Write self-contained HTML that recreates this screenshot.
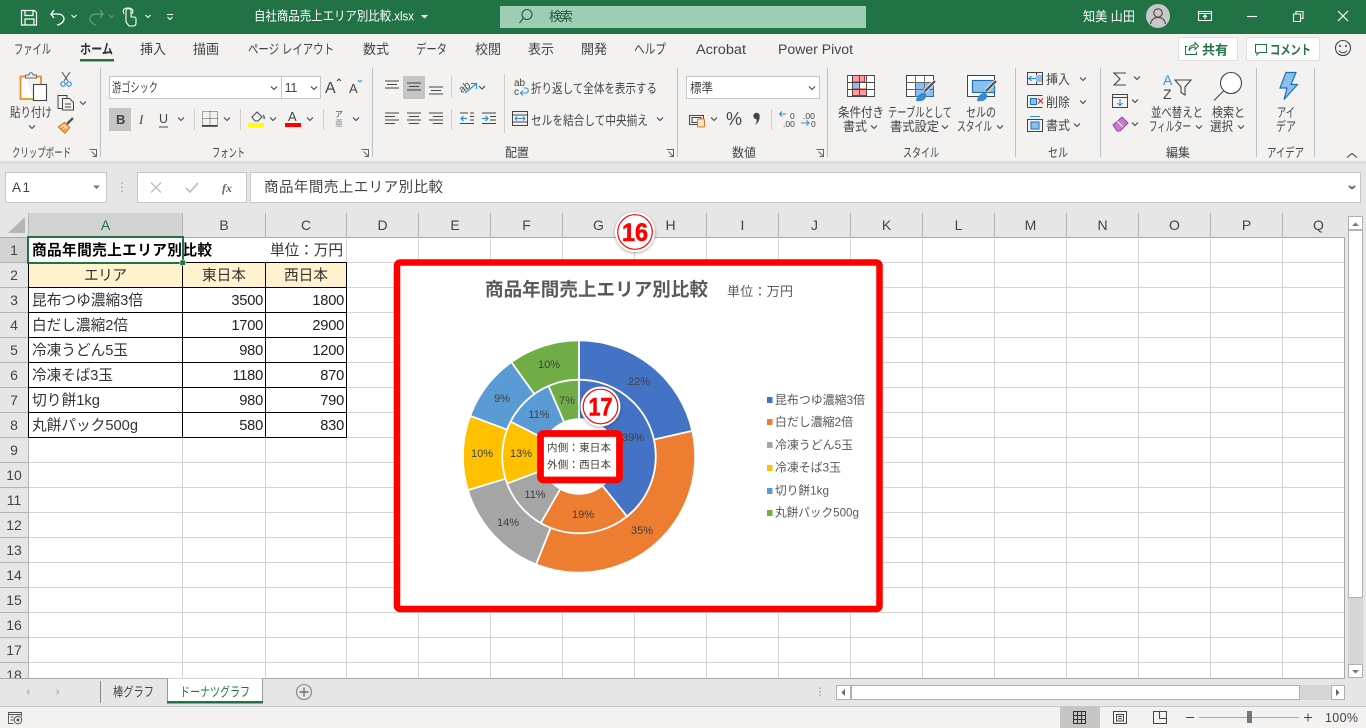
<!DOCTYPE html>
<html lang="ja"><head><meta charset="utf-8"><title>自社商品売上エリア別比較.xlsx</title>
<style>
html,body{margin:0;padding:0;background:#e6e6e6;overflow:hidden}
svg{display:block;position:absolute;left:0;top:0}
text{font-family:"Liberation Sans","Noto Sans CJK JP",sans-serif;font-size:13px;fill:#444;white-space:pre}
.w{fill:#fff}
.c{font-size:14.67px;fill:#333}
.h{font-size:14px;fill:#444;text-anchor:middle}
.n{font-size:14.67px;fill:#222;text-anchor:end;letter-spacing:-.25px}
.m{font-size:11px;fill:#404040;text-anchor:middle}
.l{font-size:12px;fill:#595959}
.tb{font-size:13.5px}
.gl{font-size:12.5px}
.g{stroke:#d4d4d4;stroke-width:1}
.hl{stroke:#b4b4b4;stroke-width:1}
.t{stroke:#000;stroke-width:1}
</style></head><body>
<svg width="1366" height="728" viewBox="0 0 1366 728" xmlns="http://www.w3.org/2000/svg">
<defs>
<path id="cv" d="M-3-1.500L0 1.500L3-1.500" fill="none" stroke="#444" stroke-width="1.100"/>
<path id="la" d="M0 0h7v7M2 2l5 5M7 3v4h-4" fill="none" stroke="#666" stroke-width="1"/>
<filter id="sh" x="-30%" y="-30%" width="160%" height="160%"><feDropShadow dx="0" dy="1" stdDeviation="1.500" flood-color="#000" flood-opacity=".35"/></filter>
</defs>
<rect width="1366" height="728" fill="#e6e6e6"/>

<!-- title bar -->
<rect width="1366" height="34" fill="#217346"/>
<g fill="none" stroke="#fff" stroke-width="1.200">
<path d="M21.500 10.500h13l2 2v12.500h-15zM25 10.500v5h8v-5M25 25v-6h9v6"/>
<path d="M54 10l-3 4h7c4 0 6 2.500 6 5s-3 5.500-7 6M51 14l3 4" stroke-width="1.300"/>
<g stroke="#6f9c83"><path d="M100 10l3 4h-7c-4 0-6 2.500-6 5s3 5.500 6 6M103 14l-3 4"/><path d="M109 15l2.500 2.500l2.500-2.500" stroke-width="1"/></g>
<path d="M126 19v-8c0-3 5-3 5 0v6h3c2 0 2 1 2 3v3c0 2-1 3-3 3h-4l-3-4zM124 14c-2-4 0-6 4-6s6 2 4 6" stroke-width="1.100"/>
</g>
<path d="M71.500 15l2.500 2.500l2.500-2.500M145.500 15l2.500 2.500l2.500-2.500M167 14.500h6M167.500 17l2.500 2.500l2.500-2.500" fill="none" stroke="#fff" stroke-width="1"/>
<text class="w" x="254" y="20.500" textLength="160" lengthAdjust="spacingAndGlyphs">自社商品売上エリア別比較.xlsx</text>
<path d="M421 15h7l-3.500 3.500z" fill="#fff"/>
<rect x="500" y="6" width="366" height="22" fill="#9fcdb3"/>
<circle cx="527" cy="14.500" r="5" fill="none" stroke="#1f5c3c" stroke-width="1.100"/><path d="M523.500 18l-4 5" stroke="#1f5c3c" stroke-width="1.100"/>
<text x="549" y="21" textLength="24" style="fill:#1c5a39">検索</text>
<text class="w" x="1083" y="21" textLength="52" lengthAdjust="spacingAndGlyphs">知美 山田</text>
<circle cx="1158" cy="16" r="12" fill="#c8c8c8"/>
<circle cx="1158" cy="13" r="4.200" fill="none" stroke="#444" stroke-width="1.100"/><path d="M1150.500 24c1-5 4-6.500 7.500-6.500s6.500 1.500 7.500 6.500" fill="none" stroke="#444" stroke-width="1.100"/>
<g fill="none" stroke="#fff" stroke-width="1.100">
<path d="M1198.500 11.500h13v9h-13zM1198.500 13.500h13M1205 19v-4M1203 17l2-2l2 2"/>
<path d="M1247 16.500h10"/>
<path d="M1293.500 14h7v7.500h-7zM1296 14v-2.500h7v7h-2.500"/>
<path d="M1338 11l10 10M1348 11l-10 10" stroke-width="1.200"/>
</g>

<!-- ribbon -->
<rect y="34" width="1366" height="127" fill="#f3f2f1"/>
<rect y="161" width="1366" height="3" fill="#dcdcdc"/>
<text class="tb" x="14" y="54" textLength="37" lengthAdjust="spacingAndGlyphs">ファイル</text>
<text class="tb" x="80" y="54" textLength="33" lengthAdjust="spacingAndGlyphs" font-weight="700" style="fill:#333">ホーム</text>
<rect x="80" y="59" width="34" height="2.500" fill="#217346"/>
<text class="tb" x="140" y="54" textLength="26" lengthAdjust="spacingAndGlyphs">挿入</text>
<text class="tb" x="193" y="54" textLength="26" lengthAdjust="spacingAndGlyphs">描画</text>
<text class="tb" x="248" y="54" textLength="86" lengthAdjust="spacingAndGlyphs">ページ レイアウト</text>
<text class="tb" x="363" y="54" textLength="26" lengthAdjust="spacingAndGlyphs">数式</text>
<text class="tb" x="416" y="54" textLength="31" lengthAdjust="spacingAndGlyphs">データ</text>
<text class="tb" x="475" y="54" textLength="26" lengthAdjust="spacingAndGlyphs">校閲</text>
<text class="tb" x="528" y="54" textLength="26" lengthAdjust="spacingAndGlyphs">表示</text>
<text class="tb" x="581" y="54" textLength="26" lengthAdjust="spacingAndGlyphs">開発</text>
<text class="tb" x="634" y="54" textLength="32" lengthAdjust="spacingAndGlyphs">ヘルプ</text>
<text class="tb" x="696" y="54" textLength="50" lengthAdjust="spacingAndGlyphs">Acrobat</text>
<text class="tb" x="778" y="54" textLength="75" lengthAdjust="spacingAndGlyphs">Power Pivot</text>

<rect x="1178.500" y="37.500" width="59" height="23" rx="1.500" fill="#fff" stroke="#e1dfdd"/>
<path d="M1187.500 46.500h-2v8h11v-3M1189 51c0-4 2-6 6-6v-2.500l3.500 3.500l-3.500 3.500v-2.500c-3 0-5 1-6 4z" fill="none" stroke="#217346" stroke-width="1"/>
<text x="1202" y="54.500" textLength="26" font-weight="700" style="font-size:13px;fill:#217346">共有</text>
<rect x="1246.500" y="37.500" width="73" height="23" rx="1.500" fill="#fff" stroke="#e1dfdd"/>
<path d="M1255.500 44.500h11v8h-7.500l-2 2.500v-2.500h-1.500z" fill="none" stroke="#217346" stroke-width="1"/>
<text x="1270" y="54.500" textLength="41" lengthAdjust="spacingAndGlyphs" font-weight="700" style="font-size:13px;fill:#217346">コメント</text>
<circle cx="1343" cy="48" r="7.500" fill="none" stroke="#444" stroke-width="1.100"/>
<circle cx="1340" cy="46" r="1" fill="#444"/><circle cx="1346" cy="46" r="1" fill="#444"/>
<path d="M1339 50.500c2 3 6 3 8 0" fill="none" stroke="#444"/>

<!-- group separators -->
<path d="M100.500 68v89M372.500 68v89M677.500 68v89M827.500 68v89M1015.500 68v89M1100.500 68v89M1256.500 68v89M1314.500 68v89" stroke="#c0c0c0" stroke-width="1"/>
<path d="M194.500 109v21M240.500 109v21M323.500 109v21M451.500 76v22M451.500 109v21M504.500 74v59M771.500 109v21" stroke="#d0cecc" stroke-width="1"/>

<!-- group labels -->
<text class="gl" x="12" y="157" textLength="59" lengthAdjust="spacingAndGlyphs">クリップボード</text>
<text class="gl" x="212" y="157" textLength="33" lengthAdjust="spacingAndGlyphs">フォント</text>
<text class="gl" x="505" y="157" textLength="24" lengthAdjust="spacingAndGlyphs">配置</text>
<text class="gl" x="732" y="157" textLength="24" lengthAdjust="spacingAndGlyphs">数値</text>
<text class="gl" x="903" y="157" textLength="36" lengthAdjust="spacingAndGlyphs">スタイル</text>
<text class="gl" x="1048" y="157" textLength="20" lengthAdjust="spacingAndGlyphs">セル</text>
<text class="gl" x="1166" y="157" textLength="24" lengthAdjust="spacingAndGlyphs">編集</text>
<text class="gl" x="1267" y="157" textLength="37" lengthAdjust="spacingAndGlyphs">アイデア</text>
<use href="#la" x="89.500" y="149.500"/><use href="#la" x="361.500" y="149.500"/><use href="#la" x="666.500" y="149.500"/><use href="#la" x="816.500" y="149.500"/>
<path d="M1347 157.500l5-4l5 4" fill="none" stroke="#444" stroke-width="1.100"/>

<!-- clipboard -->
<path d="M25 76.500h-4.500v22.500h13" fill="#fff" stroke="#e8902a" stroke-width="1.800"/>
<path d="M25 76.500h16v8" fill="none" stroke="#e8902a" stroke-width="1.800"/>
<path d="M25.500 78v-3h3.500c0-3 4-3 4 0h3.500v3z" fill="#f3f2f1" stroke="#666" stroke-width="1"/>
<rect x="33.500" y="84.500" width="13" height="16" fill="#fff" stroke="#444" stroke-width="1.100"/>
<text x="10" y="117" textLength="42" lengthAdjust="spacingAndGlyphs">貼り付け</text>
<use href="#cv" x="32" y="127"/>
<path d="M62 72l6 9M70 72l-6 9" stroke="#555" stroke-width="1.100"/><circle cx="63" cy="84" r="2.200" fill="none" stroke="#2f8fd8" stroke-width="1.200"/><circle cx="69" cy="84" r="2.200" fill="none" stroke="#2f8fd8" stroke-width="1.200"/>
<path d="M62.500 108.500h-4.500v-13h9v3M62.500 98.500h7l4 4v7.500h-11z" fill="#f3f2f1" stroke="#444" stroke-width="1"/><path d="M65 104h6M65 107h6" stroke="#444"/>
<use href="#cv" x="83" y="103"/>
<path d="M58.500 127l6-4.500l5 5l-4.500 5.500z" fill="#fbd3a6" stroke="#e07b1a" stroke-width="1.300"/><path d="M61 129l3-2M63.500 131l2.500-2.500" stroke="#e07b1a"/><path d="M67 124l6-6" stroke="#555" stroke-width="2.400"/>

<!-- font -->
<rect x="109.500" y="76.500" width="172" height="22" fill="#fff" stroke="#c6c6c6"/>
<rect x="281.500" y="76.500" width="39" height="22" fill="#fff" stroke="#c6c6c6"/>
<text x="112" y="92" textLength="46" lengthAdjust="spacingAndGlyphs">游ゴシック</text>
<use href="#cv" x="274" y="88"/>
<text x="284.500" y="92" textLength="13">11</text>
<use href="#cv" x="314" y="88"/>
<text x="325" y="93" style="font-size:16px">A</text><path d="M337 81l2-2l2 2" fill="none" stroke="#444"/>
<text x="349" y="93" style="font-size:13px">A</text><path d="M358 80l2 2l2-2" fill="none" stroke="#2f8fd8"/>
<rect x="109" y="108" width="22" height="23" fill="#c6c5c3"/>
<text x="116" y="124" font-weight="700" style="font-size:13px">B</text>
<text x="139" y="124" font-style="italic" style="font-size:13px;font-family:'Liberation Serif',serif">I</text>
<text x="159" y="123" style="font-size:12.500px">U</text><path d="M159 127h9" stroke="#444"/>
<use href="#cv" x="181" y="119"/>
<path d="M202.500 111.500h15v14h-15zM210 111.500v14M202.500 118.500h15" fill="none" stroke="#555" stroke-dasharray="1 1"/><path d="M202 126h15.500" stroke="#000" stroke-width="1.200"/>
<use href="#cv" x="227" y="119"/>
<path d="M252 117l5-5l5 5l-4 4h-3z" fill="none" stroke="#444"/><path d="M263 115c1 1 1.500 2.500 1 4" stroke="#2f6fb0" stroke-width="1.500" fill="none"/>
<rect x="248" y="123" width="16" height="4" fill="#ff0"/>
<use href="#cv" x="273" y="119"/>
<text x="288" y="121" style="font-size:13px">A</text>
<rect x="285" y="123" width="16" height="4" fill="#f00"/>
<use href="#cv" x="310" y="119"/>
<text x="335" y="117" style="font-size:8px">ア</text><text x="335" y="126" style="font-size:8px;fill:#888">亜</text>
<use href="#cv" x="356" y="119"/>

<!-- alignment -->
<rect x="403" y="76" width="22" height="23" fill="#c6c5c3"/>
<g stroke="#444" stroke-width="1">
<path d="M385 81h14M387 84.500h10M385 88h14"/>
<path d="M407 83h14M409 86.500h10M407 90h14"/>
<path d="M429 87h14M431 90.500h10M429 94h14"/>
<path d="M385 113h14M385 116.500h10M385 120h14M385 123.500h10"/>
<path d="M407 113h14M409 116.500h10M407 120h14M409 123.500h10"/>
<path d="M429 113h14M433 116.500h10M429 120h14M433 123.500h10"/>
<path d="M470 113h4M470 116.500h4M470 120h4M460 123.500h14M460 113h8"/>
<path d="M482 113h14M490 116.500h6M490 120h6M482 123.500h14"/>
</g>
<path d="M467 118.500h-6M463.500 116l-2.500 2.500l2.500 2.500M482 118.500h6M485.500 116l2.500 2.500l-2.500 2.500" fill="none" stroke="#2f8fd8" stroke-width="1.200"/>
<text x="459" y="91" style="font-size:10.500px" transform="rotate(-35 464 88)">ab</text>
<path d="M465 93l11-9M471 83.500h5.500v5.500" fill="none" stroke="#2f8fd8" stroke-width="1.200"/>
<use href="#cv" x="482" y="87.500"/>
<text x="514" y="86" style="font-size:10px">ab</text><text x="514" y="95" style="font-size:10px">c</text>
<path d="M521 93h5c3 0 3-5 0-5h-2M523 90.500l-2.500 2.500l2.500 2.500" fill="none" stroke="#2f8fd8" stroke-width="1.100"/>
<text x="531" y="93" textLength="126" lengthAdjust="spacingAndGlyphs">折り返して全体を表示する</text>
<path d="M512.500 111.500h15v14h-15zM512.500 115h15M512.500 122h15" fill="none" stroke="#444"/>
<path d="M515 118.500h10M517 116.500l-2 2l2 2M523 116.500l2 2l-2 2" fill="none" stroke="#2f8fd8"/>
<text x="531" y="125" textLength="117" lengthAdjust="spacingAndGlyphs">セルを結合して中央揃え</text>
<use href="#cv" x="660" y="119"/>

<!-- number -->
<rect x="686.500" y="76.500" width="133" height="22" fill="#fff" stroke="#c6c6c6"/>
<text x="690" y="92.500" textLength="23" lengthAdjust="spacingAndGlyphs">標準</text>
<use href="#cv" x="812" y="88"/>
<path d="M689.500 115.500h14v9h-14z" fill="none" stroke="#444"/><rect x="692" y="117.500" width="9" height="5" fill="none" stroke="#444"/>
<rect x="697.500" y="119" width="7" height="8" rx="1" fill="#fbe2c8" stroke="#e07b1a"/>
<use href="#cv" x="714" y="119"/>
<text x="726" y="125" textLength="16" lengthAdjust="spacingAndGlyphs" style="font-size:18px">%</text>
<circle cx="756.500" cy="116" r="3.200" fill="#444"/><path d="M759.500 116c.5 4-1.500 7-4.500 9c1.500-2.500 2-4 1.500-6z" fill="#444"/>
<path d="M786 114h-6M782 111.500l-2.500 2.500l2.500 2.500" fill="none" stroke="#2f8fd8" stroke-width="1.100"/>
<text x="790" y="119" style="font-size:8.500px">0</text><text x="783" y="127" style="font-size:8.500px">.00</text>
<text x="803" y="119" style="font-size:8.500px">.00</text><text x="811" y="127" style="font-size:8.500px">0</text>
<path d="M801 123h8M806.500 120.500l2.500 2.500l-2.500 2.500" fill="none" stroke="#2f8fd8" stroke-width="1.100"/>

<!-- styles -->
<rect x="847" y="75" width="27" height="21" fill="#fff"/>
<rect x="852.500" y="75.500" width="12" height="6.500" fill="#ff9ca3" stroke="#e02020"/>
<rect x="852.500" y="82" width="7" height="7" fill="#8cc0ec"/>
<rect x="852.500" y="89" width="14" height="6.500" fill="#ff9ca3" stroke="#e02020"/>
<path d="M847.500 75.500h27v21h-27zM847.500 82.500h27M847.500 89.500h27M852.500 75.500v21M866.500 75.500v21M859.500 75.500v21" fill="none" stroke="#444" stroke-width=".9"/>
<text x="838" y="117" textLength="46" lengthAdjust="spacingAndGlyphs">条件付き</text>
<text x="843" y="131" textLength="24" lengthAdjust="spacingAndGlyphs">書式</text><use href="#cv" x="874" y="127"/>
<rect x="906.500" y="75.500" width="27" height="21" fill="#fff" stroke="#444"/>
<rect x="915.500" y="82.500" width="18" height="14" fill="#8cc0ec" stroke="#1f6fb8"/>
<path d="M906.500 82.500h27M906.500 89.500h27M915.500 75.500v21M924.500 75.500v21" fill="none" stroke="#666" stroke-width=".9"/>
<path d="M925 91l10-10" stroke="#fff" stroke-width="4"/><path d="M925 91l10-10" stroke="#555" stroke-width="2.400"/>
<path d="M916 101c0-3 3-8 7-8c3 0 4 2 3 4c-1 3-4 5-10 4z" fill="#3a8ad0"/>
<text x="888" y="117" textLength="64" lengthAdjust="spacingAndGlyphs">テーブルとして</text>
<text x="890" y="131" textLength="49" lengthAdjust="spacingAndGlyphs">書式設定</text><use href="#cv" x="945" y="127"/>
<rect x="967.500" y="75.500" width="27" height="21" fill="#fff" stroke="#444"/>
<rect x="972.500" y="80.500" width="22" height="12" fill="#8cc0ec" stroke="#1f6fb8" stroke-width="1.200"/>
<path d="M986 91l10-10" stroke="#fff" stroke-width="4"/><path d="M986 91l10-10" stroke="#555" stroke-width="2.400"/>
<path d="M977 101c0-3 3-8 7-8c3 0 4 2 3 4c-1 3-4 5-10 4z" fill="#3a8ad0"/>
<text x="966" y="117" textLength="30" lengthAdjust="spacingAndGlyphs">セルの</text>
<text x="957" y="131" textLength="35" lengthAdjust="spacingAndGlyphs">スタイル</text><use href="#cv" x="1000" y="127"/>

<!-- cells -->
<path d="M1027.500 72.500h15v12h-15zM1027.500 78.500h15M1036.500 72.500v12" fill="none" stroke="#444"/>
<rect x="1036" y="75" width="6" height="7" fill="#8cc0ec"/><path d="M1036 78.500h-7M1031.500 76l-2.500 2.500l2.500 2.500" fill="none" stroke="#2f8fd8" stroke-width="1.200"/>
<text x="1046" y="84" textLength="24" lengthAdjust="spacingAndGlyphs">挿入</text><use href="#cv" x="1083" y="79"/>
<path d="M1027.500 95.500h15M1027.500 107.500h15M1027.500 95.500v12" fill="none" stroke="#444"/><rect x="1030.500" y="98.500" width="6" height="6" fill="#8cc0ec" stroke="#1f6fb8"/><path d="M1038 98.500l5 5M1043 98.500l-5 5" stroke="#e02020" stroke-width="1.200"/>
<text x="1046" y="107" textLength="24" lengthAdjust="spacingAndGlyphs">削除</text><use href="#cv" x="1083" y="102"/>
<path d="M1027.500 119.500h15v12h-15z" fill="none" stroke="#444"/><rect x="1031" y="122" width="8" height="7" fill="#8cc0ec" stroke="#1f6fb8"/><path d="M1030 116.500h10" stroke="#2f8fd8"/>
<text x="1046" y="130" textLength="24" lengthAdjust="spacingAndGlyphs">書式</text><use href="#cv" x="1077" y="125"/>

<!-- editing -->
<path d="M1126 73h-12l6 6l-6 6h12" fill="none" stroke="#444" stroke-width="1.100"/><use href="#cv" x="1137" y="78"/>
<rect x="1112.500" y="94.500" width="15" height="13" fill="none" stroke="#444"/><path d="M1112.500 97.500h15" stroke="#444"/><path d="M1120 99v6M1117.500 103l2.500 2.500l2.500-2.500" fill="none" stroke="#2f8fd8" stroke-width="1.100"/><use href="#cv" x="1135" y="101"/>
<path d="M1113 125l9-8l6 6l-8 8h-3z" fill="#c77bcb" stroke="#9a3fa5"/><path d="M1117 121l6 6" stroke="#fff"/><use href="#cv" x="1135" y="124"/>
<text x="1163" y="85" style="font-size:14px;fill:#2f8fd8">A</text><text x="1163" y="99" style="font-size:14px">Z</text>
<path d="M1175 80h16l-6 7v8l-4-2.500v-5.500z" fill="none" stroke="#444" stroke-width="1.100"/>
<text x="1151" y="117" textLength="52" lengthAdjust="spacingAndGlyphs">並べ替えと</text>
<text x="1149" y="131" textLength="42" lengthAdjust="spacingAndGlyphs">フィルター</text><use href="#cv" x="1199" y="127"/>
<circle cx="1231" cy="83" r="10.500" fill="#fff" stroke="#444" stroke-width="1.100"/><path d="M1223.500 91l-9.500 9.500" stroke="#444" stroke-width="1.100"/>
<text x="1212" y="117" textLength="33" lengthAdjust="spacingAndGlyphs">検索と</text>
<text x="1210" y="131" textLength="23" lengthAdjust="spacingAndGlyphs">選択</text><use href="#cv" x="1241" y="127"/>
<path d="M1286 72.500h10l-5 12h6.500l-13.500 15l3-11.500h-7z" fill="#8cc0ec" stroke="#1f6fb8" stroke-width="1.200"/>
<text x="1277" y="117" textLength="18" lengthAdjust="spacingAndGlyphs">アイ</text>
<text x="1276" y="131" textLength="20" lengthAdjust="spacingAndGlyphs">デア</text>

<!-- formula bar -->
<rect x="5.500" y="172.500" width="101" height="30" fill="#fff" stroke="#c6c6c6"/>
<text x="12" y="192" textLength="18" style="font-size:13.500px">A1</text>
<path d="M93 185.500h7l-3.500 3.500z" fill="#777"/>
<path d="M122 182.500v1.500M122 186.500v1.500M122 190.500v1.500" stroke="#999" stroke-width="1.200"/>
<rect x="137.500" y="172.500" width="109" height="30" fill="#fff" stroke="#c6c6c6"/>
<path d="M151 182.500l10 10M161 182.500l-10 10" stroke="#c0c0c0" stroke-width="1.500"/>
<path d="M186 188l4 4l8-9" fill="none" stroke="#c0c0c0" stroke-width="1.800"/>
<text x="222" y="192" font-style="italic" font-weight="700" style="font-size:12px;font-family:'Liberation Serif',serif;fill:#666">fx</text>
<rect x="250.500" y="172.500" width="1110" height="30" fill="#fff" stroke="#c6c6c6"/>
<text x="264" y="192" textLength="179" style="font-size:14.500px">商品年間売上エリア別比較</text>
<path d="M1349 186l3 2.500l3-2.500" fill="none" stroke="#666" stroke-width="1.800"/>

<!-- headers -->
<rect y="213" width="1346" height="25" fill="#e6e6e6"/>
<rect y="237" width="1345" height="441" fill="#fff"/>
<rect x="29" y="213" width="154" height="24" fill="#d2d2d2"/>
<rect x="0" y="238" width="28" height="440" fill="#e6e6e6"/>
<rect x="0" y="238" width="28" height="25" fill="#d2d2d2"/>
<path d="M8 233h17v-16z" fill="#b5b5b5"/>
<path class="hl" d="M182.500 213v24M265.500 213v24M346.500 213v24M418.500 213v24M490.500 213v24M562.500 213v24M634.500 213v24M706.500 213v24M778.500 213v24M850.500 213v24M922.500 213v24M994.500 213v24M1066.500 213v24M1138.500 213v24M1210.500 213v24M1282.500 213v24M28.500 213v465"/>
<path d="M0 237.500H1345" stroke="#a8a8a8"/>
<path class="hl" d="M0 262.500h28M0 287.500h28M0 312.500h28M0 337.500h28M0 362.500h28M0 387.500h28M0 412.500h28M0 437.500h28M0 462.500h28M0 487.500h28M0 512.500h28M0 537.500h28M0 562.500h28M0 587.500h28M0 612.500h28M0 637.500h28M0 662.500h28"/>
<g>
<text class="h" x="105.500" y="230" style="fill:#217346">A</text><text class="h" x="224" y="230">B</text><text class="h" x="306" y="230">C</text><text class="h" x="382.500" y="230">D</text><text class="h" x="455" y="230">E</text><text class="h" x="526.500" y="230">F</text><text class="h" x="598.500" y="230">G</text><text class="h" x="670.500" y="230">H</text><text class="h" x="742.500" y="230">I</text><text class="h" x="814.500" y="230">J</text><text class="h" x="886.500" y="230">K</text><text class="h" x="958.500" y="230">L</text><text class="h" x="1030.500" y="230">M</text><text class="h" x="1102.500" y="230">N</text><text class="h" x="1174.500" y="230">O</text><text class="h" x="1246.500" y="230">P</text><text class="h" x="1318.500" y="230">Q</text>
<text class="h" x="14" y="255">1</text><text class="h" x="14" y="280">2</text><text class="h" x="14" y="305">3</text><text class="h" x="14" y="330">4</text><text class="h" x="14" y="355">5</text><text class="h" x="14" y="380">6</text><text class="h" x="14" y="405">7</text><text class="h" x="14" y="430">8</text><text class="h" x="14" y="455">9</text><text class="h" x="14" y="480">10</text><text class="h" x="14" y="505">11</text><text class="h" x="14" y="530">12</text><text class="h" x="14" y="555">13</text><text class="h" x="14" y="580">14</text><text class="h" x="14" y="605">15</text><text class="h" x="14" y="630">16</text><text class="h" x="14" y="655">17</text><text class="h" x="14" y="680">18</text>
</g>
<rect x="0" y="678" width="29" height="30" fill="#e6e6e6"/>

<!-- gridlines -->
<path class="g" d="M29 262.500H1345M29 287.500H1345M29 312.500H1345M29 337.500H1345M29 362.500H1345M29 387.500H1345M29 412.500H1345M29 437.500H1345M29 462.500H1345M29 487.500H1345M29 512.500H1345M29 537.500H1345M29 562.500H1345M29 587.500H1345M29 612.500H1345M29 637.500H1345M29 662.500H1345"/>
<path class="g" d="M182.500 237V678M265.500 237V678M346.500 237V678M418.500 237V678M490.500 237V678M562.500 237V678M634.500 237V678M706.500 237V678M778.500 237V678M850.500 237V678M922.500 237V678M994.500 237V678M1066.500 237V678M1138.500 237V678M1210.500 237V678M1282.500 237V678"/>

<!-- table -->
<rect x="29" y="263" width="318" height="24" fill="#fff2cc"/>
<rect x="183" y="238" width="160" height="24" fill="#fff"/>
<path class="t" d="M28.500 262.500H346.500M28.500 287.500H346.500M28.500 312.500H346.500M28.500 337.500H346.500M28.500 362.500H346.500M28.500 387.500H346.500M28.500 412.500H346.500M28.500 437.500H346.500M28.500 262.500V437.500M182.500 262.500V437.500M265.500 262.500V437.500M346.500 262.500V437.500"/>
<text class="c" x="32" y="255" textLength="180" font-weight="700" style="fill:#000">商品年間売上エリア別比較</text>
<text class="c" x="270" y="255" textLength="73">単位：万円</text>
<text class="c" x="84" y="280" textLength="43">エリア</text>
<text class="c" x="202" y="280" textLength="44">東日本</text>
<text class="c" x="284" y="280" textLength="44">西日本</text>
<text class="c" x="32" y="305" textLength="111" lengthAdjust="spacingAndGlyphs">昆布つゆ濃縮3倍</text>
<text class="c" x="32" y="330" textLength="96" lengthAdjust="spacingAndGlyphs">白だし濃縮2倍</text>
<text class="c" x="32" y="355" textLength="96" lengthAdjust="spacingAndGlyphs">冷凍うどん5玉</text>
<text class="c" x="32" y="380" textLength="81" lengthAdjust="spacingAndGlyphs">冷凍そば3玉</text>
<text class="c" x="32" y="405" textLength="68" lengthAdjust="spacingAndGlyphs">切り餅1kg</text>
<text class="c" x="32" y="430" textLength="106" lengthAdjust="spacingAndGlyphs">丸餅パック500g</text>
<text class="n" x="263" y="305">3500</text><text class="n" x="344" y="305">1800</text>
<text class="n" x="263" y="330">1700</text><text class="n" x="344" y="330">2900</text>
<text class="n" x="263" y="355">980</text><text class="n" x="344" y="355">1200</text>
<text class="n" x="263" y="380">1180</text><text class="n" x="344" y="380">870</text>
<text class="n" x="263" y="405">980</text><text class="n" x="344" y="405">790</text>
<text class="n" x="263" y="430">580</text><text class="n" x="344" y="430">830</text>
<rect x="28" y="237" width="155" height="26" fill="none" stroke="#217346" stroke-width="2"/>
<rect x="180" y="260" width="5.500" height="5.500" fill="#217346" stroke="#fff" stroke-width=".6"/>

<!-- right scrollbar & frame -->
<rect x="1345" y="213" width="21" height="465" fill="#e6e6e6"/>
<path d="M1344.500 237V678.500H0" fill="none" stroke="#a8a8a8"/>
<rect x="1348" y="216" width="15" height="462" fill="#d6d6d6"/>
<rect x="1348.500" y="216.500" width="14" height="13" fill="#fff" stroke="#b0b0b0"/>
<path d="M1352 226l3.500-3.500l3.500 3.500z" fill="#777"/>
<rect x="1348.500" y="230.500" width="14" height="367" fill="#fff" stroke="#b0b0b0"/>
<rect x="1348.500" y="664.500" width="14" height="13" fill="#fff" stroke="#b0b0b0"/>
<path d="M1352 670h7l-3.500 3.500z" fill="#777"/>

<!-- tabs bar -->
<rect y="679" width="1366" height="27" fill="#e6e6e6"/>
<path d="M26 692l3.500-3.500v7zM60 692l-3.500-3.500v7z" fill="#c0c0c0"/>
<path d="M100.500 681v22" stroke="#888"/>
<text x="113" y="696.500" textLength="41" lengthAdjust="spacingAndGlyphs">棒グラフ</text>
<path d="M167.500 678.500v24h95v-24" fill="#fff" stroke="#999"/>
<rect x="167" y="701" width="96" height="2.500" fill="#217346"/>
<text x="180" y="696.500" textLength="70" lengthAdjust="spacingAndGlyphs" style="fill:#217346">ドーナツグラフ</text>
<circle cx="304" cy="692" r="7.500" fill="none" stroke="#888" stroke-width="1.100"/><path d="M299.500 692h9M304 687.500v9" stroke="#777" stroke-width="1.400"/>
<path d="M820 687.500v1.500M820 691v1.500M820 694.500v1.500" stroke="#999" stroke-width="1.200"/>
<rect x="836.500" y="685.500" width="14" height="14" fill="#fff" stroke="#b0b0b0"/><path d="M845 689l-3.500 3.500l3.500 3.500z" fill="#666"/>
<rect x="851" y="685" width="480" height="15" fill="#d6d6d6"/>
<rect x="851.500" y="685.500" width="448" height="14" fill="#fff" stroke="#b0b0b0"/>
<rect x="1331.500" y="685.500" width="13" height="14" fill="#fff" stroke="#b0b0b0"/><path d="M1336 689l3.500 3.500l-3.500 3.500z" fill="#666"/>

<!-- status bar -->
<rect y="706" width="1366" height="22" fill="#f3f2f1"/>
<path d="M0 706.500H1366" stroke="#c8c8c8"/>
<path d="M8.500 712.500h13v2h-13zM8.500 714.500v9h5M21.500 714.500v2M10.500 717h3M10.500 720h3" fill="none" stroke="#555" stroke-width=".9"/><circle cx="18" cy="720" r="3.800" fill="none" stroke="#555"/><circle cx="18" cy="720" r="1.500" fill="#555"/>
<rect x="1060" y="707" width="40" height="21" fill="#c6c5c3"/>
<path d="M1073.500 711.500h12v12h-12zM1073.500 715.500h12M1073.500 719.500h12M1077.500 711.500v12M1081.500 711.500v12" fill="none" stroke="#333"/>
<path d="M1113.500 711.500h13v12h-13zM1116.500 714.500h7v6.500h-7zM1118 716.500h4M1118 718.800h4" fill="none" stroke="#444"/>
<path d="M1153.500 711.500h13v12h-13zM1159.500 711.500v7h7" fill="none" stroke="#444"/>
<path d="M1199 717.500h100" stroke="#aaa"/>
<path d="M1186 717.500h8M1304 717.500h8M1308 713.500v8" stroke="#444"/>
<rect x="1247" y="711" width="5" height="12" fill="#777"/>
<text x="1325" y="722" textLength="33" style="font-size:12.500px">100%</text>

<!-- chart -->
<rect x="397" y="262.500" width="482.500" height="346.500" fill="#fff" stroke="#f00" stroke-width="6.500" rx="3"/>
<text x="485" y="296" textLength="223" font-weight="700" style="font-size:18.500px;fill:#595959">商品年間売上エリア別比較</text>
<text x="727" y="296" textLength="66" style="font-size:13px;fill:#595959">単位：万円</text>

<g fill="none" transform="rotate(-90 579 456.500)" stroke-width="38.500">
<circle cx="579" cy="456.500" r="96" pathLength="360" stroke="#4472c4" stroke-dasharray="77.230 360"/>
<circle cx="579" cy="456.500" r="96" pathLength="360" stroke="#ed7d31" stroke-dasharray="124.440 360" stroke-dashoffset="-77.230"/>
<circle cx="579" cy="456.500" r="96" pathLength="360" stroke="#a5a5a5" stroke-dasharray="51.490 360" stroke-dashoffset="-201.670"/>
<circle cx="579" cy="456.500" r="96" pathLength="360" stroke="#ffc000" stroke-dasharray="37.330 360" stroke-dashoffset="-253.160"/>
<circle cx="579" cy="456.500" r="96" pathLength="360" stroke="#5b9bd5" stroke-dasharray="33.900 360" stroke-dashoffset="-290.490"/>
<circle cx="579" cy="456.500" r="96" pathLength="360" stroke="#70ad47" stroke-dasharray="35.610 360" stroke-dashoffset="-324.390"/>
<circle cx="579" cy="456.500" r="57.500" pathLength="360" stroke="#4472c4" stroke-dasharray="141.260 360"/>
<circle cx="579" cy="456.500" r="57.500" pathLength="360" stroke="#ed7d31" stroke-dasharray="68.610 360" stroke-dashoffset="-141.260"/>
<circle cx="579" cy="456.500" r="57.500" pathLength="360" stroke="#a5a5a5" stroke-dasharray="39.550 360" stroke-dashoffset="-209.870"/>
<circle cx="579" cy="456.500" r="57.500" pathLength="360" stroke="#ffc000" stroke-dasharray="47.620 360" stroke-dashoffset="-249.420"/>
<circle cx="579" cy="456.500" r="57.500" pathLength="360" stroke="#5b9bd5" stroke-dasharray="39.550 360" stroke-dashoffset="-297.040"/>
<circle cx="579" cy="456.500" r="57.500" pathLength="360" stroke="#70ad47" stroke-dasharray="23.410 360" stroke-dashoffset="-336.590"/>
</g>
<g stroke="#fff" stroke-width="1.800" fill="none">
<circle cx="579" cy="456.500" r="76.800"/>
<path d="M579 341V379.500"/>
<path d="M579 341V379.500" transform="rotate(77.230 579 456.500)"/>
<path d="M579 341V379.500" transform="rotate(201.670 579 456.500)"/>
<path d="M579 341V379.500" transform="rotate(253.160 579 456.500)"/>
<path d="M579 341V379.500" transform="rotate(290.490 579 456.500)"/>
<path d="M579 341V379.500" transform="rotate(324.390 579 456.500)"/>
<path d="M579 379.500V418.500"/>
<path d="M579 379.500V418.500" transform="rotate(141.260 579 456.500)"/>
<path d="M579 379.500V418.500" transform="rotate(209.870 579 456.500)"/>
<path d="M579 379.500V418.500" transform="rotate(249.420 579 456.500)"/>
<path d="M579 379.500V418.500" transform="rotate(297.040 579 456.500)"/>
<path d="M579 379.500V418.500" transform="rotate(336.590 579 456.500)"/>
</g>
<text class="m" x="639" y="385">22%</text><text class="m" x="642" y="534">35%</text><text class="m" x="508" y="526">14%</text><text class="m" x="482" y="457">10%</text><text class="m" x="502" y="402">9%</text><text class="m" x="549" y="368">10%</text>
<text class="m" x="633" y="441">39%</text><text class="m" x="583" y="518">19%</text><text class="m" x="535" y="498">11%</text><text class="m" x="521" y="457">13%</text><text class="m" x="539" y="418">11%</text><text class="m" x="567" y="404">7%</text>

<rect x="540.500" y="433.500" width="79" height="46.500" rx="3" fill="#fff" stroke="#f00" stroke-width="6.800"/>
<text x="547" y="451" textLength="64" style="font-size:10.500px;fill:#404040">内側：東日本</text>
<text x="547" y="468" textLength="64" style="font-size:10.500px;fill:#404040">外側：西日本</text>

<g>
<rect x="767" y="397" width="5.500" height="6" fill="#4472c4"/><text class="l" x="775" y="404" textLength="90" lengthAdjust="spacingAndGlyphs">昆布つゆ濃縮3倍</text>
<rect x="767" y="419" width="5.500" height="6" fill="#ed7d31"/><text class="l" x="775" y="426" textLength="78" lengthAdjust="spacingAndGlyphs">白だし濃縮2倍</text>
<rect x="767" y="442" width="5.500" height="6" fill="#a5a5a5"/><text class="l" x="775" y="449" textLength="78" lengthAdjust="spacingAndGlyphs">冷凍うどん5玉</text>
<rect x="767" y="465" width="5.500" height="6" fill="#ffc000"/><text class="l" x="775" y="471.500" textLength="66" lengthAdjust="spacingAndGlyphs">冷凍そば3玉</text>
<rect x="767" y="488" width="5.500" height="6" fill="#5b9bd5"/><text class="l" x="775" y="494.500" textLength="54" lengthAdjust="spacingAndGlyphs">切り餅1kg</text>
<rect x="767" y="510" width="5.500" height="6" fill="#70ad47"/><text class="l" x="775" y="516.500" textLength="84" lengthAdjust="spacingAndGlyphs">丸餅パック500g</text>
</g>

<!-- badges -->
<circle cx="635" cy="232" r="20" fill="#fff" filter="url(#sh)"/>
<circle cx="635" cy="232" r="17.300" fill="none" stroke="#f00" stroke-width="1.200"/>
<text x="622" y="241" textLength="26" lengthAdjust="spacingAndGlyphs" font-weight="700" style="font-size:25px;fill:#f00;stroke:#f00;stroke-width:.6">16</text>
<circle cx="600.500" cy="406.500" r="20" fill="#fff" filter="url(#sh)"/>
<circle cx="600.500" cy="406.500" r="17.300" fill="none" stroke="#f00" stroke-width="1.200"/>
<text x="588.500" y="415.500" textLength="24" lengthAdjust="spacingAndGlyphs" font-weight="700" style="font-size:25px;fill:#f00;stroke:#f00;stroke-width:.6">17</text>
</svg>
</body></html>
